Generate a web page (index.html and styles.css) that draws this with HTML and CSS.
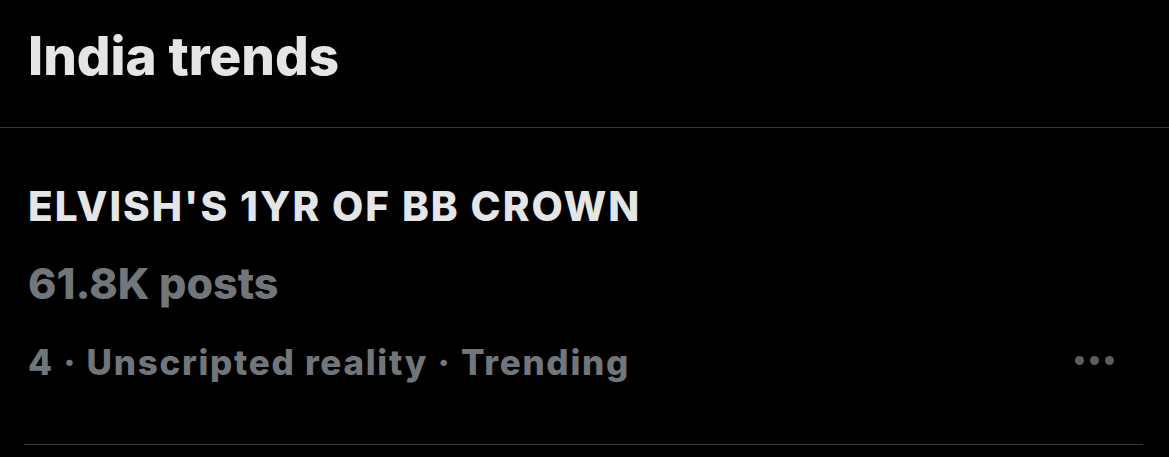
FILE: index.html
```html
<!DOCTYPE html>
<html lang="en">
<head>
<meta charset="utf-8">
<link rel="stylesheet" href="styles.css">
</head>
<body>
<main class="panel">
  <header class="panel-header">
    <h1 class="panel-title">India trends</h1>
  </header>
  <section class="trend">
    <div class="trend-body">
      <div class="trend-name">ELVISH'S 1YR OF BB CROWN</div>
      <div class="trend-count">61.8K posts</div>
      <div class="trend-meta">4 · Unscripted reality · Trending</div>
    </div>
    <button class="more" aria-label="More">
      <span class="dot"></span><span class="dot"></span><span class="dot"></span>
    </button>
  </section>
</main>
</body>
</html>
```
FILE: styles.css
```css
html, body {
  margin: 0;
  padding: 0;
  background: #000;
}
body {
  width: 1169px;
  height: 457px;
  overflow: hidden;
  font-family: Inter, Roboto, "Liberation Sans", Arial, sans-serif;
}
.panel {
  display: flex;
  flex-direction: column;
}
.panel-header {
  height: 128px;
  box-sizing: border-box;
  border-bottom: 1px solid #333639;
  padding: 24px 0 0 28px;
}
.panel-title {
  margin: 0;
  font-size: 53px;
  line-height: 64px;
  font-weight: 800;
  color: #e4e5e6;
}
.trend {
  margin: 0 26px 0 24px;
  padding: 55px 29px 0 4px;
  height: 317px;
  box-sizing: border-box;
  border-bottom: 1px solid #3a3d40;
  display: flex;
  align-items: flex-end;
  justify-content: space-between;
}
.trend-body {
  display: flex;
  flex-direction: column;
  align-self: stretch;
}
.trend-name {
  font-size: 40.5px;
  line-height: 48px;
  font-weight: 800;
  letter-spacing: 2px;
  color: #e4e5e6;
}
.trend-count {
  margin-top: 28px;
  font-size: 43px;
  line-height: 48px;
  font-weight: 800;
  color: #71767b;
}
.trend-meta {
  margin-top: 33px;
  font-size: 35px;
  line-height: 44px;
  font-weight: 800;
  letter-spacing: 1.7px;
  color: #71767b;
}
.more {
  background: none;
  border: 0;
  padding: 0;
  margin-bottom: 79px;
  display: flex;
  gap: 6px;
}
.dot {
  width: 9px;
  height: 9px;
  border-radius: 50%;
  background: #5b5e62;
}
```
